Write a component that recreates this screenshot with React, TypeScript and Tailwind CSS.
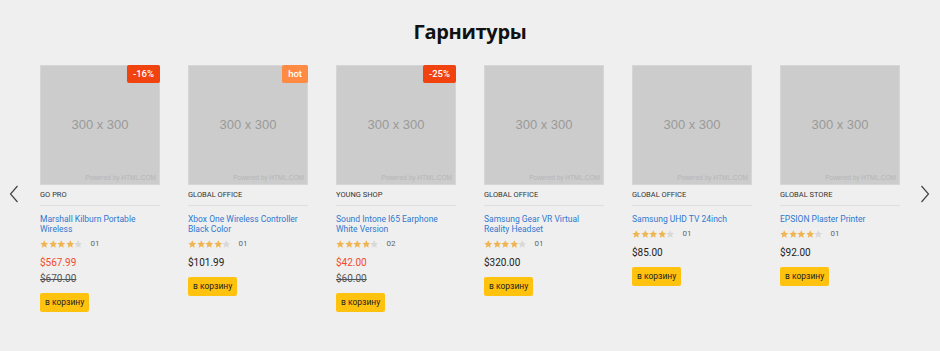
const products = [
  { brand: "GO PRO", title: "Marshall Kilburn Portable Wireless", rating: 4, count: "01", price: "$567.99", old: "$670.00", badge: "-16%" },
  { brand: "GLOBAL OFFICE", title: "Xbox One Wireless Controller Black Color", rating: 4, count: "01", price: "$101.99", badge: "hot" },
  { brand: "YOUNG SHOP", title: "Sound Intone I65 Earphone White Version", rating: 4, count: "02", price: "$42.00", old: "$60.00", badge: "-25%" },
  { brand: "GLOBAL OFFICE", title: "Samsung Gear VR Virtual Reality Headset", rating: 4, count: "01", price: "$320.00" },
  { brand: "GLOBAL OFFICE", title: "Samsung UHD TV 24inch", rating: 4, count: "01", price: "$85.00" },
  { brand: "GLOBAL STORE", title: "EPSION Plaster Printer", rating: 4, count: "01", price: "$92.00" },
];

function Star({ filled }: { filled: boolean }) {
  return (
    <svg width="8.5" height="8.5" viewBox="0 0 24 24" className={filled ? "fill-[#efb553]" : "fill-[#d9d9d9]"}>
      <path d="M12 1l3.3 7.1 7.7.8-5.8 5.2 1.7 7.7L12 17.9l-6.9 3.9 1.7-7.7L1 8.9l7.7-.8z" />
    </svg>
  );
}

function Card({ p }: { p: (typeof products)[number] }) {
  return (
    <div className="w-[120px] shrink-0">
      <div className="relative h-[120px] w-[120px] bg-[#cccccc] border border-[#d6d6d6] flex items-center justify-center">
        <span className="text-[13px] text-[#9a9a9a] font-['Liberation_Sans',sans-serif]">300 x 300</span>
        <span className="absolute right-[3px] bottom-[2px] text-[6.5px] leading-[8px] text-[#b5b5b5] font-['Liberation_Sans',sans-serif] whitespace-nowrap">
          Powered by HTML.COM
        </span>
        {p.badge && (
          <span
            className={
              "absolute -top-px -right-px h-[18px] px-[6px] flex items-center rounded-[2px] text-white text-[9.5px] font-medium " +
              (p.badge === "hot" ? "bg-[#ff8a44]" : "bg-[#f0430f]")
            }
          >
            {p.badge}
          </span>
        )}
      </div>
      <div className="pt-[5px] pb-[5px] border-b border-[#dedede] text-[7.5px] leading-[10px] text-[#333] uppercase">
        {p.brand}
      </div>
      <div className="mt-[8px] text-[8.5px] leading-[10px] text-[#2f78d0]">{p.title}</div>
      <div className="mt-[5px] h-[10px] flex items-center">
        <div className="flex">
          {[0, 1, 2, 3, 4].map((i) => (
            <Star key={i} filled={i < p.rating} />
          ))}
        </div>
        <span className="ml-[8px] text-[8px] text-[#666]">{p.count}</span>
      </div>
      <div className={"mt-[8px] text-[10px] leading-[12px] " + (p.old ? "text-[#f24a2b]" : "text-[#222]")}>{p.price}</div>
      {p.old && <div className="mt-[4px] text-[10px] leading-[12px] text-[#555] line-through">{p.old}</div>}
      <button className="mt-[8px] h-[19px] px-[5px] rounded-[2px] bg-[#ffc20e] text-[8.5px] text-[#222]">в корзину</button>
    </div>
  );
}

export default function App() {
  return (
    <div className="w-[940px] h-[351px] bg-[#efefef] font-['Roboto',sans-serif] overflow-hidden">
      <h2 className="pt-[19px] h-[65px] text-center text-[20px] leading-[26px] font-bold text-[#111] font-['Open_Sans',sans-serif] tracking-[-0.3px]">
        Гарнитуры
      </h2>
      <div className="flex">
        <div className="w-[40px] pl-[9px] pt-[120px]">
          <svg width="10" height="18" viewBox="0 0 10 18" fill="none" stroke="#444" strokeWidth="1.2">
            <path d="M8.5 1L1.5 9l7 8" />
          </svg>
        </div>
        <div className="flex gap-[28px]">
          {products.map((p, i) => (
            <Card key={i} p={p} />
          ))}
        </div>
        <div className="w-[40px] pl-[20px] pt-[120px]">
          <svg width="10" height="18" viewBox="0 0 10 18" fill="none" stroke="#444" strokeWidth="1.2">
            <path d="M1.5 1l7 8-7 8" />
          </svg>
        </div>
      </div>
    </div>
  );
}
